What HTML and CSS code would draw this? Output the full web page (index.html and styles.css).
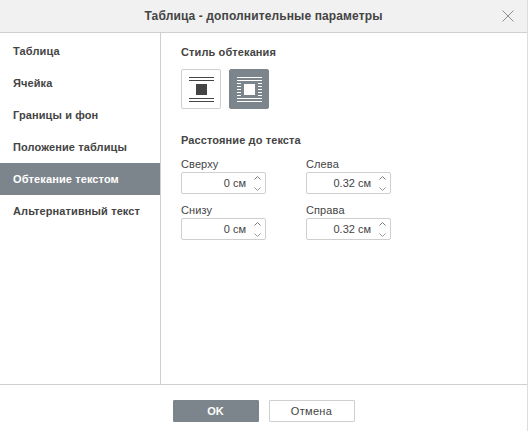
FILE: index.html
```html
<!DOCTYPE html>
<html lang="ru">
<head>
<meta charset="utf-8">
<title>Таблица - дополнительные параметры</title>
<link rel="stylesheet" href="styles.css">
</head>
<body>
<div class="dialog">
  <header class="head">
    <span class="title">Таблица - дополнительные параметры</span>
    <svg class="close" width="12" height="12" viewBox="0 0 12 12"><path d="M.5.5l11 11M11.5.5l-11 11" stroke="#8f8f8f" fill="none"/></svg>
  </header>
  <div class="main">
    <nav class="side">
      <div class="item">Таблица</div>
      <div class="item">Ячейка</div>
      <div class="item">Границы и фон</div>
      <div class="item">Положение таблицы</div>
      <div class="item active">Обтекание текстом</div>
      <div class="item">Альтернативный текст</div>
    </nav>
    <section class="content">
      <h3 class="label first">Стиль обтекания</h3>
      <div class="wraps">
        <div class="wrapbtn">
          <svg width="40" height="40" viewBox="0 0 40 40" fill="none">
            <path d="M8 8.5h25M8 11.5h25M8 29.5h25M8 32.5h25" stroke="#444"/>
            <rect x="15" y="15" width="11" height="11" fill="#444"/>
          </svg>
        </div>
        <div class="wrapbtn on">
          <svg width="40" height="40" viewBox="0 0 40 40" fill="none">
            <path d="M8 8.5h25M8 11.5h25M8 29.5h25M8 32.5h25M8 14.5h4M8 17.5h4M8 20.5h4M8 23.5h4M8 26.5h4M29 14.5h4M29 17.5h4M29 20.5h4M29 23.5h4M29 26.5h4" stroke="#fff"/>
            <rect x="15" y="15" width="11" height="11" fill="#fff"/>
          </svg>
        </div>
      </div>
      <h3 class="label second">Расстояние до текста</h3>
      <div class="fields">
        <div class="field"><label>Сверху</label><div class="spin"><span class="val">0 см</span><svg class="arrows" width="9" height="20" viewBox="0 0 9 20" fill="none"><path d="M1.5 6.5l3-3 3 3" stroke="#777"/><path d="M1.5 14.5l3 3 3-3" stroke="#999"/></svg></div></div>
        <div class="field"><label>Слева</label><div class="spin"><span class="val">0.32 см</span><svg class="arrows" width="9" height="20" viewBox="0 0 9 20" fill="none"><path d="M1.5 6.5l3-3 3 3" stroke="#777"/><path d="M1.5 14.5l3 3 3-3" stroke="#999"/></svg></div></div>
        <div class="field"><label>Снизу</label><div class="spin"><span class="val">0 см</span><svg class="arrows" width="9" height="20" viewBox="0 0 9 20" fill="none"><path d="M1.5 6.5l3-3 3 3" stroke="#777"/><path d="M1.5 14.5l3 3 3-3" stroke="#999"/></svg></div></div>
        <div class="field"><label>Справа</label><div class="spin"><span class="val">0.32 см</span><svg class="arrows" width="9" height="20" viewBox="0 0 9 20" fill="none"><path d="M1.5 6.5l3-3 3 3" stroke="#777"/><path d="M1.5 14.5l3 3 3-3" stroke="#999"/></svg></div></div>
      </div>
    </section>
  </div>
  <footer class="foot">
    <button class="btn primary">OK</button>
    <button class="btn">Отмена</button>
  </footer>
</div>
</body>
</html>
```

FILE: styles.css
```css
html, body { margin: 0; padding: 0; background: #fff; }
body { width: 528px; height: 431px; overflow: hidden; font-family: "Liberation Sans", Arial, sans-serif; font-size: 11px; color: #444; }
.dialog { width: 528px; height: 431px; box-sizing: border-box; display: flex; flex-direction: column; border-right: 1px solid #ddd; }
.head { height: 33px; box-sizing: border-box; flex: none; display: flex; align-items: center; justify-content: center; position: relative; background: #f1f1f1; border-bottom: 1px solid #cfcfcf; }
.title { font-size: 12px; font-weight: 700; letter-spacing: .01em; color: #444; }
.close { position: absolute; right: 13px; top: 10px; }
.main { flex: 1; display: flex; min-height: 0; }
.side { width: 161px; box-sizing: border-box; border-right: 1px solid #cfcfcf; padding-top: 2px; flex: none; }
.item { height: 32px; line-height: 32px; padding-left: 13px; font-weight: 700; letter-spacing: .01em; }
.item.active { background: #7d858c; color: #fff; }
.content { flex: 1; padding: 13px 0 0 20px; }
.label { margin: 0; font-size: 11px; font-weight: 700; line-height: 13px; letter-spacing: .01em; }
.wraps { display: flex; gap: 8px; margin-top: 10px; }
.wrapbtn { width: 40px; height: 40px; box-sizing: border-box; border: 1px solid #cfcfcf; border-radius: 2px; display: flex; align-items: center; justify-content: center; }
.wrapbtn svg { flex: none; }
.wrapbtn.on { background: #7d858c; border-color: #7d858c; }
.second { margin-top: 25px; }
.fields { display: grid; grid-template-columns: 85px 85px; column-gap: 40px; row-gap: 9px; margin-top: 10px; }
.field label { display: block; height: 14px; line-height: 14px; margin-bottom: 1px; letter-spacing: .01em; }
.spin { height: 22px; box-sizing: border-box; border: 1px solid #cfcfcf; border-radius: 2px; display: flex; align-items: center; justify-content: flex-end; padding-right: 3px; }
.val { margin-right: 7px; }
.foot { height: 47px; box-sizing: border-box; flex: none; border-top: 1px solid #cfcfcf; display: flex; justify-content: center; gap: 10px; padding-top: 15px; }
.btn { width: 86px; height: 22px; box-sizing: border-box; border: 1px solid #cfcfcf; border-radius: 1px; background: #fff; font: 700 11px "Liberation Sans", Arial, sans-serif; color: #444; padding: 0; }
.btn:last-child { font-weight: 400; letter-spacing: .03em; }
.btn.primary { background: #7d858c; border-color: #7d858c; color: #fff; }
```
